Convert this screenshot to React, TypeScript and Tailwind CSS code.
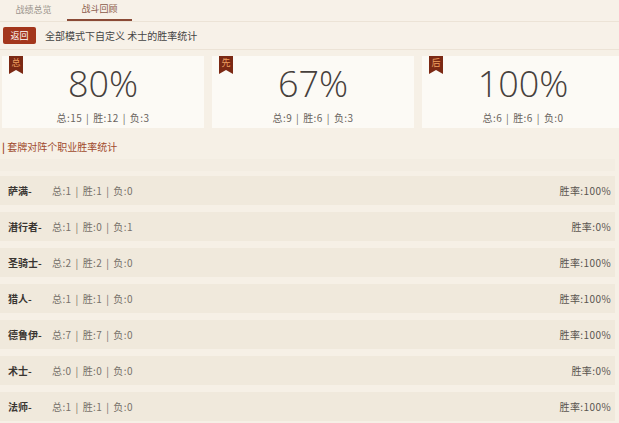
import React from 'react';

const cjk = { fontFamily: '"Noto Sans CJK SC", "Noto Sans", sans-serif' };
const num = { fontFamily: '"Open Sans", "Noto Sans CJK SC", sans-serif' };

const summary = [
  { tag: '总', pct: '80%', total: 15, win: 12, lose: 3 },
  { tag: '先', pct: '67%', total: 9, win: 6, lose: 3 },
  { tag: '后', pct: '100%', total: 6, win: 6, lose: 0 },
];

const classes = [
  { name: '萨满', total: 1, win: 1, lose: 0, rate: '100%' },
  { name: '潜行者', total: 1, win: 0, lose: 1, rate: '0%' },
  { name: '圣骑士', total: 2, win: 2, lose: 0, rate: '100%' },
  { name: '猎人', total: 1, win: 1, lose: 0, rate: '100%' },
  { name: '德鲁伊', total: 7, win: 7, lose: 0, rate: '100%' },
  { name: '术士', total: 0, win: 0, lose: 0, rate: '0%' },
  { name: '法师', total: 1, win: 1, lose: 0, rate: '100%' },
];

const Ribbon = ({ label }: { label: string }) => (
  <div className="absolute left-[7px] top-0 w-[14px] h-[18px]">
    <svg width="14" height="18" viewBox="0 0 14 18" className="absolute inset-0">
      <path d="M0 0H14V18L7 14L0 18Z" fill="#7b2914" />
    </svg>
    <span className="relative block text-center text-[9px] leading-[13px] text-[#f0a060]" style={cjk}>
      {label}
    </span>
  </div>
);

const Stats = ({ t, w, l }: { t: number; w: number; l: number }) => (
  <span className="tracking-[0.4px]">
    总:{t}
    <span className="mx-[4px]">|</span>胜:{w}
    <span className="mx-[4px]">|</span>负:{l}
  </span>
);

export default function App() {
  return (
    <div className="w-[619px] h-[423px] overflow-hidden bg-[#f6f0e6]" style={cjk}>
      {/* Tabs */}
      <div className="h-[22px] flex items-end border-b border-[#ece3d6] bg-[#f7f1e8]">
        <div className="w-[67px] h-[22px] flex items-center justify-center text-[9px] text-[#9a948c]">战绩总览</div>
        <div className="w-[65px] h-[22px] flex items-center justify-center text-[9px] text-[#8a5a48] border-b-2 border-[#8a4a36]">
          战斗回顾
        </div>
      </div>

      {/* Header */}
      <div className="h-[28px] flex items-center gap-[9px] px-[3px] border-b border-[#ece3d6] bg-[#f7f1e8]">
        <button className="w-[33px] h-[17px] bg-[#a3361c] text-white text-[9px] leading-[17px] rounded-[2px]">返回</button>
        <span className="text-[10px] text-[#444]">全部模式下自定义 术士的胜率统计</span>
      </div>

      {/* Summary cards */}
      <div className="flex gap-[8px] pl-[2px] pt-[6px] pb-[12px]">
        {summary.map((s) => (
          <div key={s.tag} className="relative w-[202px] h-[72px] shrink-0 bg-[#fcfaf5] flex flex-col items-center">
            <Ribbon label={s.tag} />
            <div className="text-[36px] font-light leading-none mt-[10px] text-[#46403c]" style={num}>{s.pct}</div>
            <div className="text-[10px] text-[#6a6560] mt-[8px]">
              <Stats t={s.total} w={s.win} l={s.lose} />
            </div>
          </div>
        ))}
      </div>

      {/* Section title */}
      <div className="px-[2px] text-[10px] text-[#a04a2c] leading-[14px]">
        <span className="font-bold">|</span> 套牌对阵个职业胜率统计
      </div>
      <div className="h-[12px] mt-[5px] mr-[4px] bg-[#f3ede2]" />

      {/* Rows */}
      <div className="flex flex-col gap-[7px] mt-[5px] mr-[4px]">
        {classes.map((c) => (
          <div key={c.name} className="h-[29px] flex items-center bg-[#f0e9dc] pl-[8px] pr-[4px]">
            <span className="w-[44px] text-[10px] font-bold text-[#3a3632]">{c.name}-</span>
            <span className="text-[10px] text-[#77716a]">
              <Stats t={c.total} w={c.win} l={c.lose} />
            </span>
            <span className="ml-auto text-[10px] tracking-[0.4px] text-[#5a5550]">胜率:{c.rate}</span>
          </div>
        ))}
      </div>
    </div>
  );
}
